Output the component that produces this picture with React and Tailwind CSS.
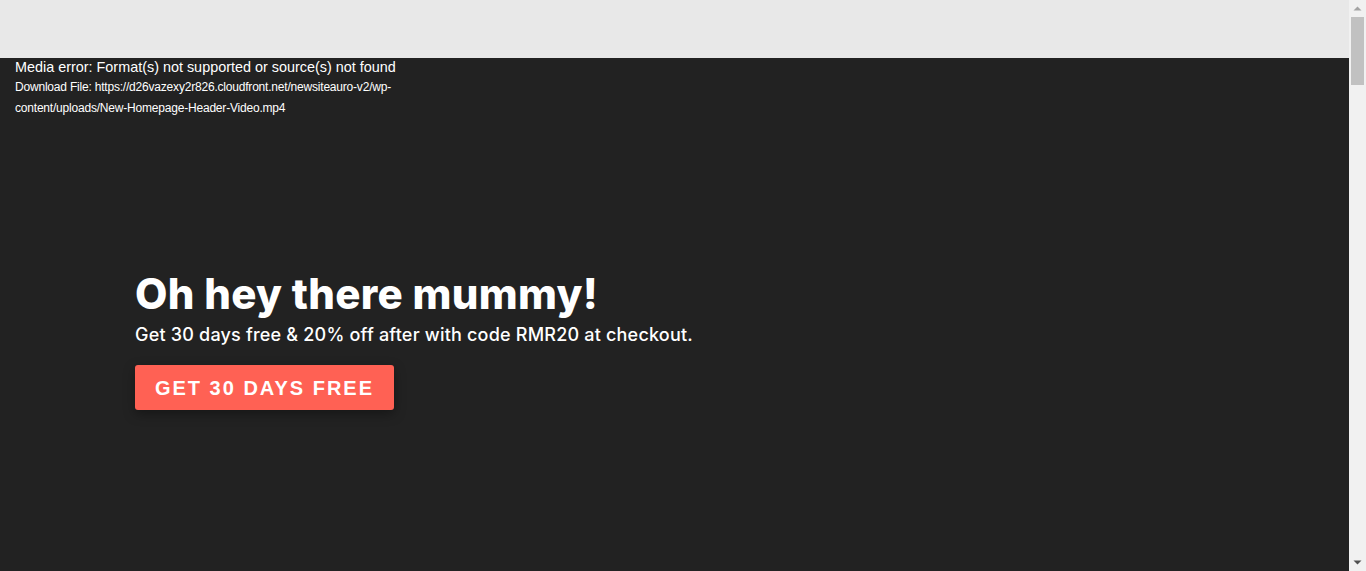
import React from 'react';

const Scrollbar = () => (
  <div className="flex w-[17px] shrink-0 flex-col items-center bg-[#f1f1f1]">
    <svg width="17" height="17" viewBox="0 0 17 17" className="shrink-0">
      <path d="M4.5 10.5 L8.5 6.5 L12.5 10.5 Z" fill="#a3a3a3" />
    </svg>
    <div className="h-[68px] w-[13px] bg-[#c1c1c1]"></div>
    <div className="flex-1"></div>
    <svg width="17" height="17" viewBox="0 0 17 17" className="shrink-0">
      <path d="M4.5 6.5 L8.5 10.5 L12.5 6.5 Z" fill="#505050" />
    </svg>
  </div>
);

const App = () => {
  return (
    <div className="flex h-[571px] overflow-hidden" style={{ fontFamily: '"Liberation Sans", Arial, sans-serif' }}>
      <div className="flex-1 bg-[#222222]">
        {/* Top bar */}
        <div className="h-[58px] bg-[#e8e8e8]"></div>

        {/* Media error notice */}
        <div className="px-[15px] text-white">
          <div className="text-[14.4px] leading-[19px]">Media error: Format(s) not supported or source(s) not found</div>
          <div className="w-[390px] text-[12px] leading-[21px] tracking-[-0.2px]">
            Download File: https://d26vazexy2r826.cloudfront.net/newsiteauro-v2/wp-content/uploads/New-Homepage-Header-Video.mp4
          </div>
        </div>

        {/* Hero */}
        <div className="pl-[135px] pt-[150px]" style={{ fontFamily: 'Inter, "Noto Sans", sans-serif' }}>
          <h1 className="text-[42px] font-extrabold leading-[50px] tracking-[0.3px] text-white">Oh hey there mummy!</h1>
          <p className="mt-[4px] text-[18px] font-medium leading-[24px] tracking-[0.2px] text-white">
            Get 30 days free &amp; 20% off after with code RMR20 at checkout.
          </p>
          <button
            className="mt-[18px] h-[45px] w-[259px] rounded-[3px] bg-[#ff6154] text-[20px] font-bold tracking-[2px] text-white shadow-[0_4px_12px_rgba(0,0,0,0.35)]"
            style={{ fontFamily: '"Liberation Sans", Arial, sans-serif' }}
          >
            GET 30 DAYS FREE
          </button>
        </div>
      </div>
      <Scrollbar />
    </div>
  );
};

export default App;
